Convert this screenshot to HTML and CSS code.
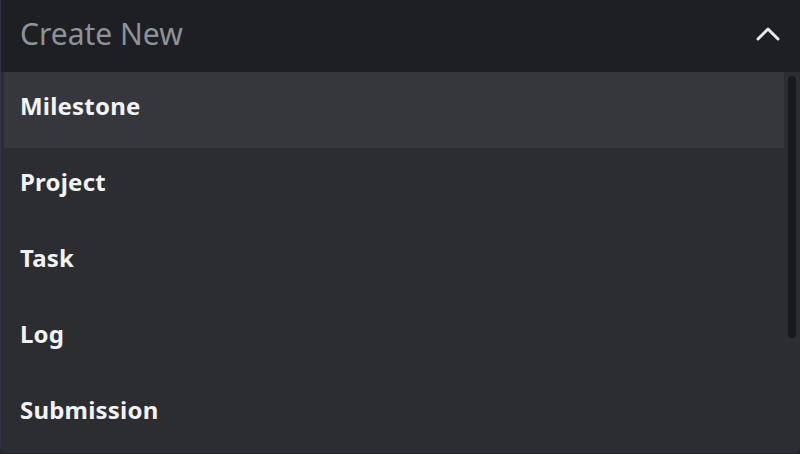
FILE: index.html
```html
<!DOCTYPE html>
<html>
<head>
<meta charset="utf-8">
<link rel="stylesheet" href="styles.css">
</head>
<body>
<div class="select">
  <div class="select-header">
    <span class="placeholder">Create New</span>
    <svg class="chevron" width="24" height="24" viewBox="0 0 24 24"><path d="M2 17 L12 7 L22 17" fill="none" stroke="#e6e7ea" stroke-width="3" stroke-linecap="round" stroke-linejoin="round"/></svg>
  </div>
  <div class="menu">
    <div class="options">
      <div class="option active">Milestone</div>
      <div class="option">Project</div>
      <div class="option">Task</div>
      <div class="option">Log</div>
      <div class="option">Submission</div>
    </div>
    <div class="scrollbar"><div class="thumb"></div></div>
  </div>
</div>
</body>
</html>
```
FILE: styles.css
```css
html, body {
  margin: 0;
  padding: 0;
  background: #23252d;
  width: 800px;
  height: 454px;
  overflow: hidden;
  font-family: "Noto Sans", "Open Sans", sans-serif;
}
.select {
  width: 800px;
  height: 453px;
  display: flex;
  flex-direction: column;
  background: #2b2d31;
  border-left: 1px solid #2e3242;
  border-radius: 0 0 6px 6px;
  box-sizing: border-box;
  overflow: hidden;
}
.select-header {
  height: 72px;
  flex: none;
  background: #1e1f22;
  display: flex;
  align-items: center;
  justify-content: space-between;
  padding: 0 20px 0 19px;
}
.placeholder {
  color: #8d929b;
  font-size: 30px;
  font-weight: 400;
  letter-spacing: 0;
  margin-top: -5px;
}
.chevron {
  margin-top: -4px;
}
.menu {
  flex: 1;
  display: flex;
  padding-left: 3px;
  background: #2b2d31;
}
.options {
  flex: 1;
  display: flex;
  flex-direction: column;
}
.option {
  height: 76px;
  display: flex;
  align-items: center;
  padding-left: 16px;
  color: #f2f3f5;
  font-size: 24px;
  font-weight: 700;
  letter-spacing: 0.2px;
  padding-bottom: 10px;
  box-sizing: border-box;
}
.option.active {
  background: #36373d;
}
.scrollbar {
  width: 16px;
  flex: none;
  padding: 4px 4px 0 4px;
  box-sizing: border-box;
}
.thumb {
  width: 8px;
  height: 262px;
  background: #1a1b1e;
  border-radius: 4px;
}
```
